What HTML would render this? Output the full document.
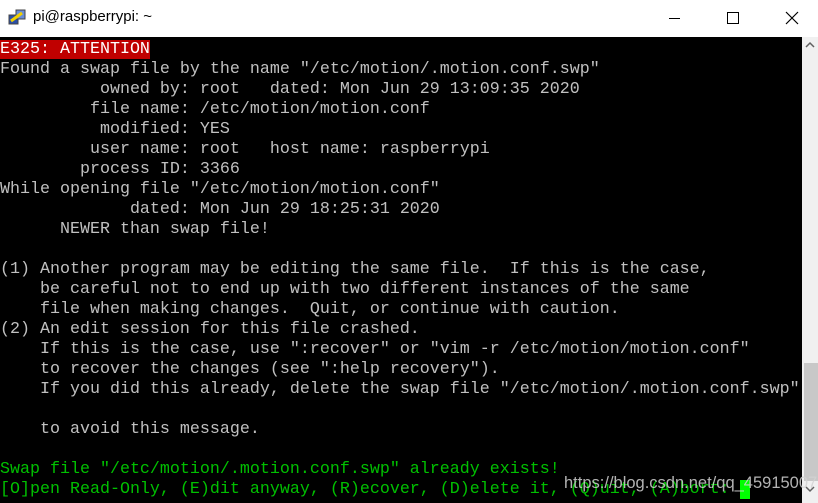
<!DOCTYPE html><html><head><style>
body{margin:0;width:818px;height:503px;overflow:hidden;background:#fff;font-family:"Liberation Sans",sans-serif}
.tb{position:absolute;left:0;top:0;width:818px;height:37px;background:#fff}
.title{position:absolute;left:33px;top:8px;font-size:15px;color:#000}
.term{position:absolute;left:0;top:37px;width:802px;height:466px;background:#000}
.sb{position:absolute;left:802px;top:37px;width:16px;height:466px;background:#f0f0f0}
.thumb{position:absolute;left:804px;top:363px;width:14px;height:118px;background:#c8c8c8}
pre{margin:0;position:absolute;left:0;top:40px;font-family:"Liberation Mono",monospace;font-size:16.67px;line-height:20px;color:#c0c0c0;letter-spacing:0}
.r{background:#c00000;color:#fff}
.g{color:#00c000}
.cur{background:#00ff00}
.wm{position:absolute;left:564px;top:474px;font-size:16.5px;color:rgba(210,210,210,.85);white-space:nowrap;z-index:5}
</style></head><body>
<div class="tb">
<svg style="position:absolute;left:7px;top:9px" width="20" height="18"><rect x="2" y="6" width="9" height="9" fill="#2b4fa8" stroke="#444"/><rect x="9" y="1" width="9" height="9" fill="#6a8ed8" stroke="#444"/><path d="M4 12 L15 4" stroke="#f0d000" stroke-width="3"/></svg>
<div class="title">pi@raspberrypi: ~</div>
<div style="position:absolute;left:669px;top:18px;width:11px;height:1px;background:#000"></div>
<div style="position:absolute;left:727px;top:12px;width:10px;height:10px;border:1px solid #000"></div>
<svg style="position:absolute;left:785px;top:11px" width="14" height="14"><path d="M1 1L13 13M13 1L1 13" stroke="#000" stroke-width="1.2"/></svg>
</div>
<div class="term"></div>
<div class="sb"></div><div class="thumb"></div>
<svg style="position:absolute;left:805px;top:41px" width="10" height="8"><path d="M1 6L5 2L9 6" stroke="#606060" stroke-width="1.5" fill="none"/></svg>
<svg style="position:absolute;left:805px;top:485px" width="10" height="8"><path d="M1 2L5 6L9 2" stroke="#606060" stroke-width="1.5" fill="none"/></svg>
<pre><span class="r">E325: ATTENTION</span>
Found a swap file by the name "/etc/motion/.motion.conf.swp"
          owned by: root   dated: Mon Jun 29 13:09:35 2020
         file name: /etc/motion/motion.conf
          modified: YES
         user name: root   host name: raspberrypi
        process ID: 3366
While opening file "/etc/motion/motion.conf"
             dated: Mon Jun 29 18:25:31 2020
      NEWER than swap file!

(1) Another program may be editing the same file.  If this is the case,
    be careful not to end up with two different instances of the same
    file when making changes.  Quit, or continue with caution.
(2) An edit session for this file crashed.
    If this is the case, use ":recover" or "vim -r /etc/motion/motion.conf"
    to recover the changes (see ":help recovery").
    If you did this already, delete the swap file "/etc/motion/.motion.conf.swp"

    to avoid this message.

<span class="g">Swap file "/etc/motion/.motion.conf.swp" already exists!</span>
<span class="g">[O]pen Read-Only, (E)dit anyway, (R)ecover, (D)elete it, (Q)uit, (A)bort: </span><span class="cur"> </span></pre>
<div class="wm">https://blog.csdn.net/qq_45915007</div>
</body></html>
